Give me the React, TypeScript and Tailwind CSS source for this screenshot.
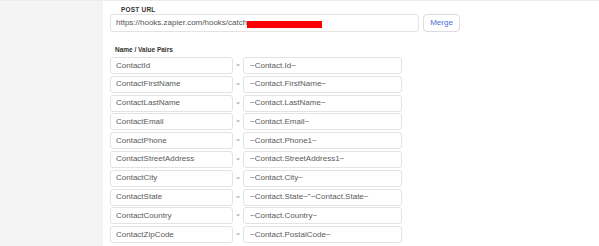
import React from "react";

const rows: [string, string][] = [
  ["ContactId", "~Contact.Id~"],
  ["ContactFirstName", "~Contact.FirstName~"],
  ["ContactLastName", "~Contact.LastName~"],
  ["ContactEmail", "~Contact.Email~"],
  ["ContactPhone", "~Contact.Phone1~"],
  ["ContactStreetAddress", "~Contact.StreetAddress1~"],
  ["ContactCity", "~Contact.City~"],
  ["ContactState", "~Contact.State~\"~Contact.State~"],
  ["ContactCountry", "~Contact.Country~"],
  ["ContactZipCode", "~Contact.PostalCode~"],
];

export default function App() {
  return (
    <div
      className="flex w-[599px] h-[246px] overflow-hidden border-t border-[#ececec] bg-white"
      style={{ fontFamily: '"Liberation Sans", Arial, sans-serif' }}
    >
      <div className="w-[103px] shrink-0 bg-[#f4f4f4]" />
      <div className="flex flex-1 flex-col bg-white pl-[7px] pt-[5px]">
        <div className="ml-[11px] h-[8px] text-[6.5px] font-bold leading-[8px] tracking-[0.2px] text-[#333]">
          POST URL
        </div>
        <div className="flex h-[18px] gap-[4px]">
          <div className="flex w-[309px] items-center rounded-[3px] border border-[#e3e3e3] px-[5px] text-[8px] text-[#555]">
            <span>https://hooks.zapier.com/hooks/catch</span>
            <span className="mt-[3px] h-[7px] w-[75px] bg-[#ff0000]" />
          </div>
          <div className="flex w-[37px] items-center justify-center rounded-[4px] border border-[#dcdcdc] text-[8px] text-[#4a6fd6]">
            Merge
          </div>
        </div>
        <div className="ml-[5px] mt-[14px] h-[8px] text-[6.5px] font-bold leading-[8px] text-[#333]">
          Name / Value Pairs
        </div>
        <div className="mt-[3px] flex flex-col gap-[1.8px]">
          {rows.map(([n, v]) => (
            <div key={n} className="flex h-[17px] items-center">
              <div className="flex h-full w-[123px] items-center rounded-[3px] border border-[#e3e3e3] px-[5px] text-[8px] text-[#5a5a5a]">
                {n}
              </div>
              <div className="flex w-[10px] items-center justify-center text-[6px] text-[#999]">=</div>
              <div className="flex h-full w-[159px] items-center rounded-[3px] border border-[#e3e3e3] px-[6px] text-[8px] text-[#5a5a5a]">
                {v}
              </div>
            </div>
          ))}
        </div>
      </div>
    </div>
  );
}
